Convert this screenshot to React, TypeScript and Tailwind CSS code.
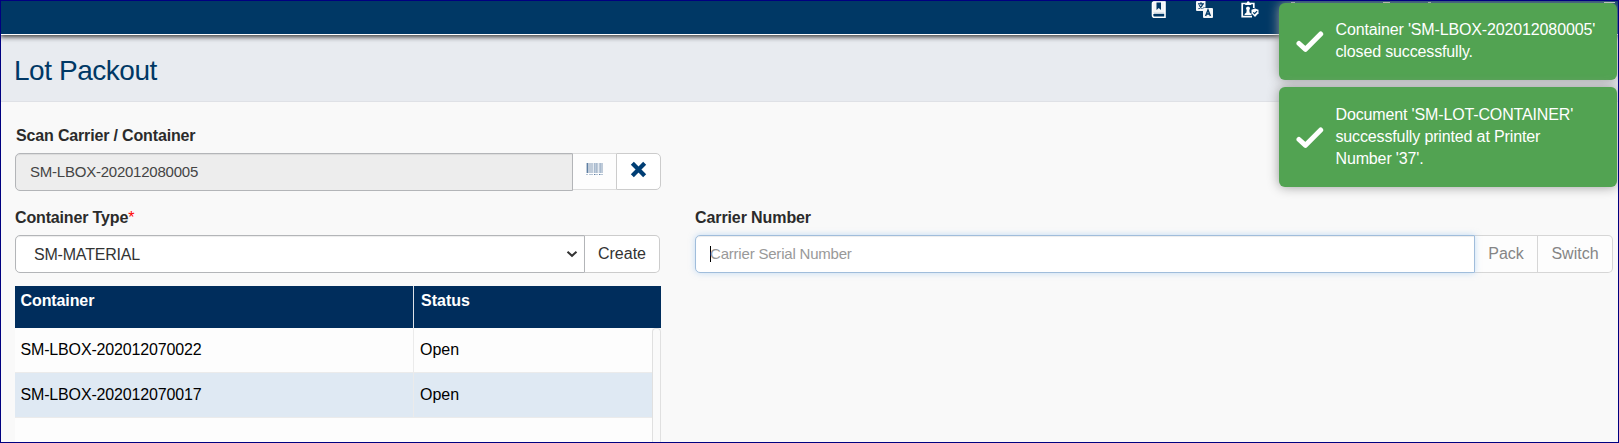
import React from "react";

const rows = [
  { container: "SM-LBOX-202012070022", status: "Open" },
  { container: "SM-LBOX-202012070017", status: "Open" },
];

function BookIcon() {
  return (
    <svg width="15" height="17" viewBox="0 0 15 17" fill="none">
      <path d="M2 0.500h12v11H2z" fill="#f3f5f7" />
      <path d="M1.500 13.500V2.500A1.500 1.500 0 0 1 3 1h11v15.200H3.500a2 2 0 0 1-2-2v-.4a1.800 1.800 0 0 1 1.800-1.800H14" stroke="#fff" strokeWidth="1.600" />
      <path d="M5.500 1.500h4.500v7.500L7.750 7 5.500 9Z" fill="#003865" />
      <path d="M3.500 14.200h9" stroke="#003865" strokeWidth="1" />
    </svg>
  );
}

function TranslateIcon() {
  return (
    <svg width="17" height="17" viewBox="0 0 17 17">
      <path d="M1 0h8.500v6.500H7V10H1a1 1 0 0 1-1-1V1a1 1 0 0 1 1-1Z" fill="#f3f5f7" />
      <path d="M2 2.800h6M5 1.300v1.500M2.500 7.700C5 6.700 6.300 5 6.600 3M3.200 4.200C4 5.700 5 6.700 6.500 7.500" stroke="#003865" strokeWidth="1.200" fill="none" />
      <rect x="7" y="7" width="10" height="10" rx="1" fill="#f3f5f7" />
      <path d="m9.600 15 2.400-6 2.400 6M10.300 13h3.400" stroke="#003865" strokeWidth="1.400" fill="none" />
    </svg>
  );
}

function BadgeCheckIcon() {
  return (
    <svg width="18" height="17" viewBox="0 0 18 17" fill="none">
      <path d="M4.500 2.500H1.200v13.200H11M10 2.500h2.800v4.500" stroke="#fff" strokeWidth="1.700" />
      <path d="M4.200 4V1.800h1.500a1.500 1.500 0 0 1 3 0h1.500V4Z" fill="#fff" />
      <circle cx="7" cy="7.300" r="1.900" fill="#fff" />
      <path d="M5.800 8h2.400l.4 3.500 1.800 1.500v1H3.600v-1l1.800-1.500Z" fill="#fff" />
      <path d="m14 7.500 3.500 1.300v3.500L14 16l-3.500-3.700V8.800Z" fill="#fff" />
      <path d="m12.200 11.300 1.400 1.400 2.500-2.600" stroke="#003865" strokeWidth="1.200" />
    </svg>
  );
}

function BarcodeIcon() {
  return (
    <svg width="17" height="13" viewBox="0 0 17 13" shapeRendering="crispEdges">
      <path d="M0 0h17v10H0z" fill="#bfcbd9" />
      <path d="M1 0h1v10H1z" fill="#5e7fa3" />
      <path d="M8 0h1v10H8zM10 0h1v10h-1zM14 0h1v10h-1z" fill="#a9bbcf" />
      <path d="M7 0h1v10H7zM12 0h1v10h-1z" fill="#e4eaf1" />
      <path d="M0 11h2v1H0zM3 11h4v1H3zM9 11h3v1H9zM14 11h3v1h-3z" fill="#b5c4d5" />
      <path d="M8 11h1v1H8zM13 11h1v1h-1z" fill="#5e7fa3" />
    </svg>
  );
}

function CheckIcon() {
  return (
    <svg className="shrink-0" width="28" height="22" viewBox="0 0 28 22" fill="none">
      <path d="m3 12.500 6.500 5.800L24.700 3" stroke="#fff" strokeWidth="5" strokeLinecap="round" strokeLinejoin="round" />
    </svg>
  );
}

function Toast({ children, className }: { children: React.ReactNode; className: string }) {
  return (
    <div
      className={`flex w-[338px] items-start rounded-md bg-[#52a352] pl-[16.500px] text-[16px] leading-[22px] tracking-[-0.14px] text-white shadow-[0_0_12px_#999] ${className}`}
    >
      {children}
    </div>
  );
}

export default function App() {
  return (
    <div className="relative flex h-[443px] w-[1619px] flex-col overflow-hidden border border-[#000080] bg-[#f9f9f9] font-['Liberation_Sans',Arial,sans-serif] text-[16px] leading-[22px] text-[#333]">
      <header className="relative z-10 flex h-[34px] shrink-0 items-start border-b border-white bg-[#003865] pl-[1150px] shadow-[0_1px_5px_1px_rgba(0,0,0,0.75)]">
        <div className="flex w-[45px]"><BookIcon /></div>
        <div className="flex w-[45px]"><TranslateIcon /></div>
        <div className="flex w-[44px]"><BadgeCheckIcon /></div>
        <div className="mt-px ml-[6px] h-px w-[4px] bg-[#a9b4bd]" />
        <div className="mt-px ml-[88px] h-px w-[7px] bg-[#d0c9bf]" />
        <div className="mt-px ml-[38px] h-px w-[3px] bg-[#a9b4bd]" />
        <div className="mt-px ml-[173px] h-px w-[11px] bg-[#d5d8da]" />
      </header>
      <div className="flex h-[67px] shrink-0 items-center border-b border-[#dfe1e6] bg-[#e8ebf0] pt-[6px] pl-[13px]">
        <h1 className="text-[28px] leading-[34px] tracking-[-0.45px] text-[#003865]">Lot Packout</h1>
      </div>
      <main className="flex flex-1 items-start">
        <section className="ml-[14px] flex w-[646px] flex-col">
          <label className="mt-[23px] ml-px font-bold tracking-[-0.16px] text-[#2b2b2b]">Scan Carrier / Container</label>
          <div className="mt-[6px] flex items-start">
            <div className="flex h-[38px] w-[558px] items-center rounded-l-[5px] border border-[#b3b5b8] bg-[#ededed] pl-[14px] text-[15px] tracking-[-0.23px] text-[#444] shadow-[inset_0_1px_1px_rgba(0,0,0,0.075)]">
              SM-LBOX-202012080005
            </div>
            <button className="flex h-[37px] w-[43px] justify-center border-y border-[#ddd] bg-[#fdfdfd] pt-[9px]">
              <BarcodeIcon />
            </button>
            <button className="flex h-[37px] w-[45px] justify-center rounded-r-[5px] border border-[#ccc] bg-white pt-[7px]">
              <svg width="17" height="17" viewBox="0 0 16 16">
                <path d="m2.200 2.200 11.600 11.600M13.800 2.200 2.200 13.800" stroke="#003e74" strokeWidth="4" />
              </svg>
            </button>
          </div>
          <label className="mt-[16px] font-bold tracking-[-0.15px] text-[#2b2b2b]">
            Container Type<span className="font-normal text-[#ff0000]">*</span>
          </label>
          <div className="mt-[6px] flex">
            <div className="flex h-[38px] w-[570px] items-center justify-between rounded-l-[5px] border border-[#b3b5b8] bg-white pr-[6px] pl-[18px] shadow-[inset_0_1px_1px_rgba(0,0,0,0.075)]">
              <span className="pt-[2px] tracking-[-0.2px]">SM-MATERIAL</span>
              <svg width="12" height="8" viewBox="0 0 12 8" fill="none">
                <path d="m1.500 1.800 4.500 4 4.500-4" stroke="#333" strokeWidth="2" />
              </svg>
            </div>
            <button className="flex h-[38px] w-[75px] items-center justify-center rounded-r-[5px] border border-l-0 border-[#ccc] bg-white">
              Create
            </button>
          </div>
          <div className="mt-[13px] flex h-[42px] bg-[#002d5c] font-bold text-white">
            <div className="w-[399px] border-r border-[#dde2e8] pt-[4px] pl-[5.500px] tracking-[-0.1px]">Container</div>
            <div className="pt-[4px] pl-[7px]">Status</div>
          </div>
          <div className="flex h-[114px] text-black">
            <div className="flex w-[637px] flex-col bg-[#fdfdfd]">
              {rows.map((row, i) => (
                <div
                  key={row.container}
                  className={`flex h-[45px] shrink-0 items-center border-b border-[#ebebeb] ${i % 2 ? "bg-[#dfe9f3]" : "bg-[#fdfdfd]"}`}
                >
                  <div className="flex h-full w-[399px] items-center border-r border-[#ebebeb] pl-[5.500px] tracking-[-0.16px]">{row.container}</div>
                  <div className="pl-[6px]">{row.status}</div>
                </div>
              ))}
            </div>
            <div className="w-[9px] rounded-t-[4px] border border-b-0 border-[#e0e0e0] bg-[#fafafa]" />
          </div>
        </section>
        <section className="mt-[105px] ml-[34px] flex w-[919px] flex-col">
          <label className="font-bold tracking-[-0.1px] text-[#2b2b2b]">Carrier Number</label>
          <div className="mt-[6px] flex">
            <div className="z-10 flex h-[38px] w-[780px] items-center rounded-l-[5px] border border-[#a0bddb] bg-white pl-[14px] text-[15px] tracking-[-0.2px] text-[#999] shadow-[inset_0_1px_1px_rgba(0,0,0,0.075),0_0_6px_rgba(140,190,240,0.5)]">
              <span className="-mr-px h-[16px] w-px bg-black" />
              Carrier Serial Number
            </div>
            <button className="h-[38px] w-[63px] border-y border-r border-[#d6d6d6] bg-[#fdfdfd] text-[#858585]">Pack</button>
            <button className="h-[38px] w-[75px] rounded-r-[5px] border border-l-0 border-[#d6d6d6] bg-[#fdfdfd] text-[#858585]">Switch</button>
          </div>
        </section>
      </main>
      <div className="absolute top-[2px] left-[1278px] z-20 flex flex-col gap-[7px]">
        <Toast className="h-[77px] pt-[16px]">
          <div className="mr-[12px] pt-[12px]"><CheckIcon /></div>
          <p>Container 'SM-LBOX-202012080005'<br />closed successfully.</p>
        </Toast>
        <Toast className="h-[100px] pt-[17px]">
          <div className="mr-[12px] pt-[23px]"><CheckIcon /></div>
          <p>Document 'SM-LOT-CONTAINER'<br />successfully printed at Printer<br />Number '37'.</p>
        </Toast>
      </div>
    </div>
  );
}
